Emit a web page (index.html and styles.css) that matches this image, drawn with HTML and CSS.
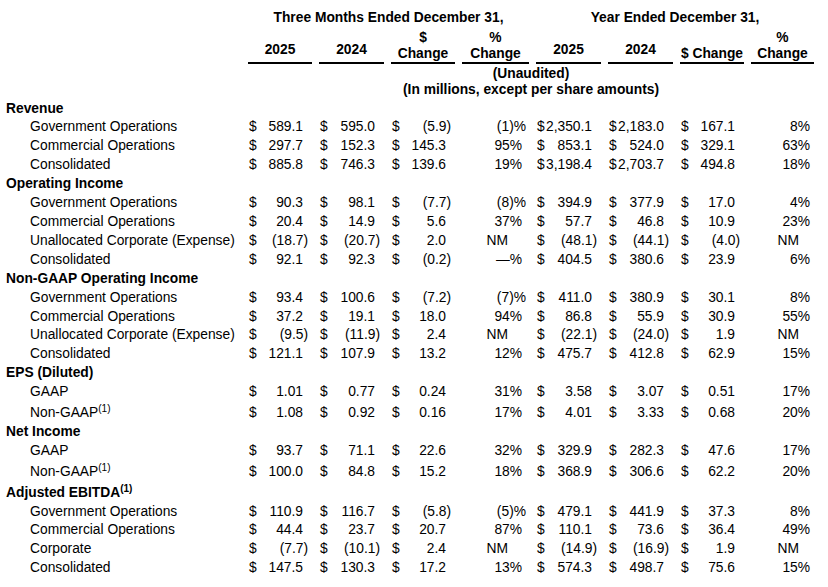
FILE: index.html
```html
<!DOCTYPE html>
<html lang="en">
<head>
<meta charset="utf-8">
<title>Segment Results</title>
<link rel="stylesheet" href="styles.css">
</head>
<body>
<div class="report">
  <div class="row head1">
    <div class="grp-a">Three Months Ended December 31,</div>
    <div class="grp-b">Year Ended December 31,</div>
  </div>
  <div class="row head2">
    <div class="blank"></div>
    <div class="h yr">2025</div>
    <div class="h yr">2024</div>
    <div class="h">$<br>Change</div>
    <div class="h">%<br>Change</div>
    <div class="h yr">2025</div>
    <div class="h yr">2024</div>
    <div class="h">$ Change</div>
    <div class="h">%<br>Change</div>
  </div>
  <div class="row head3"><div class="note">(Unaudited)</div></div>
  <div class="row head4"><div class="note">(In millions, except per share amounts)</div></div>

  <div class="row sect first"><div class="title">Revenue</div></div>
  <div class="row"><div class="lbl">Government Operations</div>
    <div class="m"><span>$</span><span>589.1</span></div><div class="m"><span>$</span><span>595.0</span></div><div class="m n"><span>$</span><span>(5.9)</span></div><div class="pc n">(1)%</div>
    <div class="m"><span>$</span><span>2,350.1</span></div><div class="m"><span>$</span><span>2,183.0</span></div><div class="m"><span>$</span><span>167.1</span></div><div class="pc y">8%</div></div>
  <div class="row"><div class="lbl">Commercial Operations</div>
    <div class="m"><span>$</span><span>297.7</span></div><div class="m"><span>$</span><span>152.3</span></div><div class="m"><span>$</span><span>145.3</span></div><div class="pc">95%</div>
    <div class="m"><span>$</span><span>853.1</span></div><div class="m"><span>$</span><span>524.0</span></div><div class="m"><span>$</span><span>329.1</span></div><div class="pc y">63%</div></div>
  <div class="row"><div class="lbl">Consolidated</div>
    <div class="m"><span>$</span><span>885.8</span></div><div class="m"><span>$</span><span>746.3</span></div><div class="m"><span>$</span><span>139.6</span></div><div class="pc">19%</div>
    <div class="m"><span>$</span><span>3,198.4</span></div><div class="m"><span>$</span><span>2,703.7</span></div><div class="m"><span>$</span><span>494.8</span></div><div class="pc y">18%</div></div>

  <div class="row sect"><div class="title">Operating Income</div></div>
  <div class="row"><div class="lbl">Government Operations</div>
    <div class="m"><span>$</span><span>90.3</span></div><div class="m"><span>$</span><span>98.1</span></div><div class="m n"><span>$</span><span>(7.7)</span></div><div class="pc n">(8)%</div>
    <div class="m"><span>$</span><span>394.9</span></div><div class="m"><span>$</span><span>377.9</span></div><div class="m"><span>$</span><span>17.0</span></div><div class="pc y">4%</div></div>
  <div class="row"><div class="lbl">Commercial Operations</div>
    <div class="m"><span>$</span><span>20.4</span></div><div class="m"><span>$</span><span>14.9</span></div><div class="m"><span>$</span><span>5.6</span></div><div class="pc">37%</div>
    <div class="m"><span>$</span><span>57.7</span></div><div class="m"><span>$</span><span>46.8</span></div><div class="m"><span>$</span><span>10.9</span></div><div class="pc y">23%</div></div>
  <div class="row"><div class="lbl">Unallocated Corporate (Expense)</div>
    <div class="m n"><span>$</span><span>(18.7)</span></div><div class="m n"><span>$</span><span>(20.7)</span></div><div class="m"><span>$</span><span>2.0</span></div><div class="pc nm">NM</div>
    <div class="m n"><span>$</span><span>(48.1)</span></div><div class="m n"><span>$</span><span>(44.1)</span></div><div class="m n"><span>$</span><span>(4.0)</span></div><div class="pc y nm">NM</div></div>
  <div class="row"><div class="lbl">Consolidated</div>
    <div class="m"><span>$</span><span>92.1</span></div><div class="m"><span>$</span><span>92.3</span></div><div class="m n"><span>$</span><span>(0.2)</span></div><div class="pc">—%</div>
    <div class="m"><span>$</span><span>404.5</span></div><div class="m"><span>$</span><span>380.6</span></div><div class="m"><span>$</span><span>23.9</span></div><div class="pc y">6%</div></div>

  <div class="row sect"><div class="title">Non-GAAP Operating Income</div></div>
  <div class="row"><div class="lbl">Government Operations</div>
    <div class="m"><span>$</span><span>93.4</span></div><div class="m"><span>$</span><span>100.6</span></div><div class="m n"><span>$</span><span>(7.2)</span></div><div class="pc n">(7)%</div>
    <div class="m"><span>$</span><span>411.0</span></div><div class="m"><span>$</span><span>380.9</span></div><div class="m"><span>$</span><span>30.1</span></div><div class="pc y">8%</div></div>
  <div class="row"><div class="lbl">Commercial Operations</div>
    <div class="m"><span>$</span><span>37.2</span></div><div class="m"><span>$</span><span>19.1</span></div><div class="m"><span>$</span><span>18.0</span></div><div class="pc">94%</div>
    <div class="m"><span>$</span><span>86.8</span></div><div class="m"><span>$</span><span>55.9</span></div><div class="m"><span>$</span><span>30.9</span></div><div class="pc y">55%</div></div>
  <div class="row"><div class="lbl">Unallocated Corporate (Expense)</div>
    <div class="m n"><span>$</span><span>(9.5)</span></div><div class="m n"><span>$</span><span>(11.9)</span></div><div class="m"><span>$</span><span>2.4</span></div><div class="pc nm">NM</div>
    <div class="m n"><span>$</span><span>(22.1)</span></div><div class="m n"><span>$</span><span>(24.0)</span></div><div class="m"><span>$</span><span>1.9</span></div><div class="pc y nm">NM</div></div>
  <div class="row"><div class="lbl">Consolidated</div>
    <div class="m"><span>$</span><span>121.1</span></div><div class="m"><span>$</span><span>107.9</span></div><div class="m"><span>$</span><span>13.2</span></div><div class="pc">12%</div>
    <div class="m"><span>$</span><span>475.7</span></div><div class="m"><span>$</span><span>412.8</span></div><div class="m"><span>$</span><span>62.9</span></div><div class="pc y">15%</div></div>

  <div class="row sect"><div class="title">EPS (Diluted)</div></div>
  <div class="row"><div class="lbl">GAAP</div>
    <div class="m"><span>$</span><span>1.01</span></div><div class="m"><span>$</span><span>0.77</span></div><div class="m"><span>$</span><span>0.24</span></div><div class="pc">31%</div>
    <div class="m"><span>$</span><span>3.58</span></div><div class="m"><span>$</span><span>3.07</span></div><div class="m"><span>$</span><span>0.51</span></div><div class="pc y">17%</div></div>
  <div class="row tall"><div class="lbl">Non-GAAP<sup class="sup">(1)</sup></div>
    <div class="m"><span>$</span><span>1.08</span></div><div class="m"><span>$</span><span>0.92</span></div><div class="m"><span>$</span><span>0.16</span></div><div class="pc">17%</div>
    <div class="m"><span>$</span><span>4.01</span></div><div class="m"><span>$</span><span>3.33</span></div><div class="m"><span>$</span><span>0.68</span></div><div class="pc y">20%</div></div>

  <div class="row sect"><div class="title">Net Income</div></div>
  <div class="row"><div class="lbl">GAAP</div>
    <div class="m"><span>$</span><span>93.7</span></div><div class="m"><span>$</span><span>71.1</span></div><div class="m"><span>$</span><span>22.6</span></div><div class="pc">32%</div>
    <div class="m"><span>$</span><span>329.9</span></div><div class="m"><span>$</span><span>282.3</span></div><div class="m"><span>$</span><span>47.6</span></div><div class="pc y">17%</div></div>
  <div class="row tall"><div class="lbl">Non-GAAP<sup class="sup">(1)</sup></div>
    <div class="m"><span>$</span><span>100.0</span></div><div class="m"><span>$</span><span>84.8</span></div><div class="m"><span>$</span><span>15.2</span></div><div class="pc">18%</div>
    <div class="m"><span>$</span><span>368.9</span></div><div class="m"><span>$</span><span>306.6</span></div><div class="m"><span>$</span><span>62.2</span></div><div class="pc y">20%</div></div>

  <div class="row sect tall"><div class="title">Adjusted EBITDA<sup class="sup">(1)</sup></div></div>
  <div class="row"><div class="lbl">Government Operations</div>
    <div class="m"><span>$</span><span>110.9</span></div><div class="m"><span>$</span><span>116.7</span></div><div class="m n"><span>$</span><span>(5.8)</span></div><div class="pc n">(5)%</div>
    <div class="m"><span>$</span><span>479.1</span></div><div class="m"><span>$</span><span>441.9</span></div><div class="m"><span>$</span><span>37.3</span></div><div class="pc y">8%</div></div>
  <div class="row"><div class="lbl">Commercial Operations</div>
    <div class="m"><span>$</span><span>44.4</span></div><div class="m"><span>$</span><span>23.7</span></div><div class="m"><span>$</span><span>20.7</span></div><div class="pc">87%</div>
    <div class="m"><span>$</span><span>110.1</span></div><div class="m"><span>$</span><span>73.6</span></div><div class="m"><span>$</span><span>36.4</span></div><div class="pc y">49%</div></div>
  <div class="row"><div class="lbl">Corporate</div>
    <div class="m n"><span>$</span><span>(7.7)</span></div><div class="m n"><span>$</span><span>(10.1)</span></div><div class="m"><span>$</span><span>2.4</span></div><div class="pc nm">NM</div>
    <div class="m n"><span>$</span><span>(14.9)</span></div><div class="m n"><span>$</span><span>(16.9)</span></div><div class="m"><span>$</span><span>1.9</span></div><div class="pc y nm">NM</div></div>
  <div class="row"><div class="lbl">Consolidated</div>
    <div class="m"><span>$</span><span>147.5</span></div><div class="m"><span>$</span><span>130.3</span></div><div class="m"><span>$</span><span>17.2</span></div><div class="pc">13%</div>
    <div class="m"><span>$</span><span>574.3</span></div><div class="m"><span>$</span><span>498.7</span></div><div class="m"><span>$</span><span>75.6</span></div><div class="pc y">15%</div></div>
</div>
</body>
</html>
```

FILE: styles.css
```css
html, body {
  margin: 0;
  padding: 0;
  background: #ffffff;
}

body {
  color: #000000;
  font-family: "Liberation Sans", Arial, sans-serif;
  font-size: 13.8px;
}

.report {
  width: 828px;
  padding-top: 10px;
}

.row {
  display: grid;
  grid-template-columns: 241px 64px 65px 64px 67px 65px 65px 64px 63px;
  column-gap: 7px;
  line-height: 18.9px;
  white-space: nowrap;
}

/* header rows */
.head1 {
  line-height: 16px;
  font-weight: bold;
}

.grp-a {
  grid-column: 2 / 6;
  text-align: center;
}

.grp-b {
  grid-column: 6 / 10;
  text-align: center;
}

.head2 {
  margin-top: 3.5px;
  line-height: 16px;
  font-weight: bold;
  align-items: end;
}

.head2 .h {
  text-align: center;
  border-bottom: 2px solid #000000;
}

.head2 .yr {
  padding-bottom: 4px;
}

.head3,
.head4 {
  line-height: 16px;
  font-weight: bold;
}

.head3 {
  margin-top: 2.5px;
}

.note {
  grid-column: 2 / 10;
  text-align: center;
}

/* body rows */
.first {
  margin-top: 1.55px;
}

.tall {
  padding-top: 2px;
}

.title {
  grid-column: 1 / 10;
  font-weight: bold;
  padding-left: 6px;
}

.lbl {
  padding-left: 30px;
}

.sup {
  font-size: 10px;
  line-height: 0;
  vertical-align: 5px;
}

.m {
  display: flex;
  justify-content: space-between;
  padding-left: 1px;
  padding-right: 9px;
}

.m.n {
  padding-right: 4px;
}

.pc {
  text-align: right;
  padding-right: 7px;
}

.pc.n {
  padding-right: 3px;
}

.pc.nm {
  padding-right: 21px;
}

.pc.y {
  padding-right: 4px;
}

.pc.y.nm {
  padding-right: 15px;
}
```
